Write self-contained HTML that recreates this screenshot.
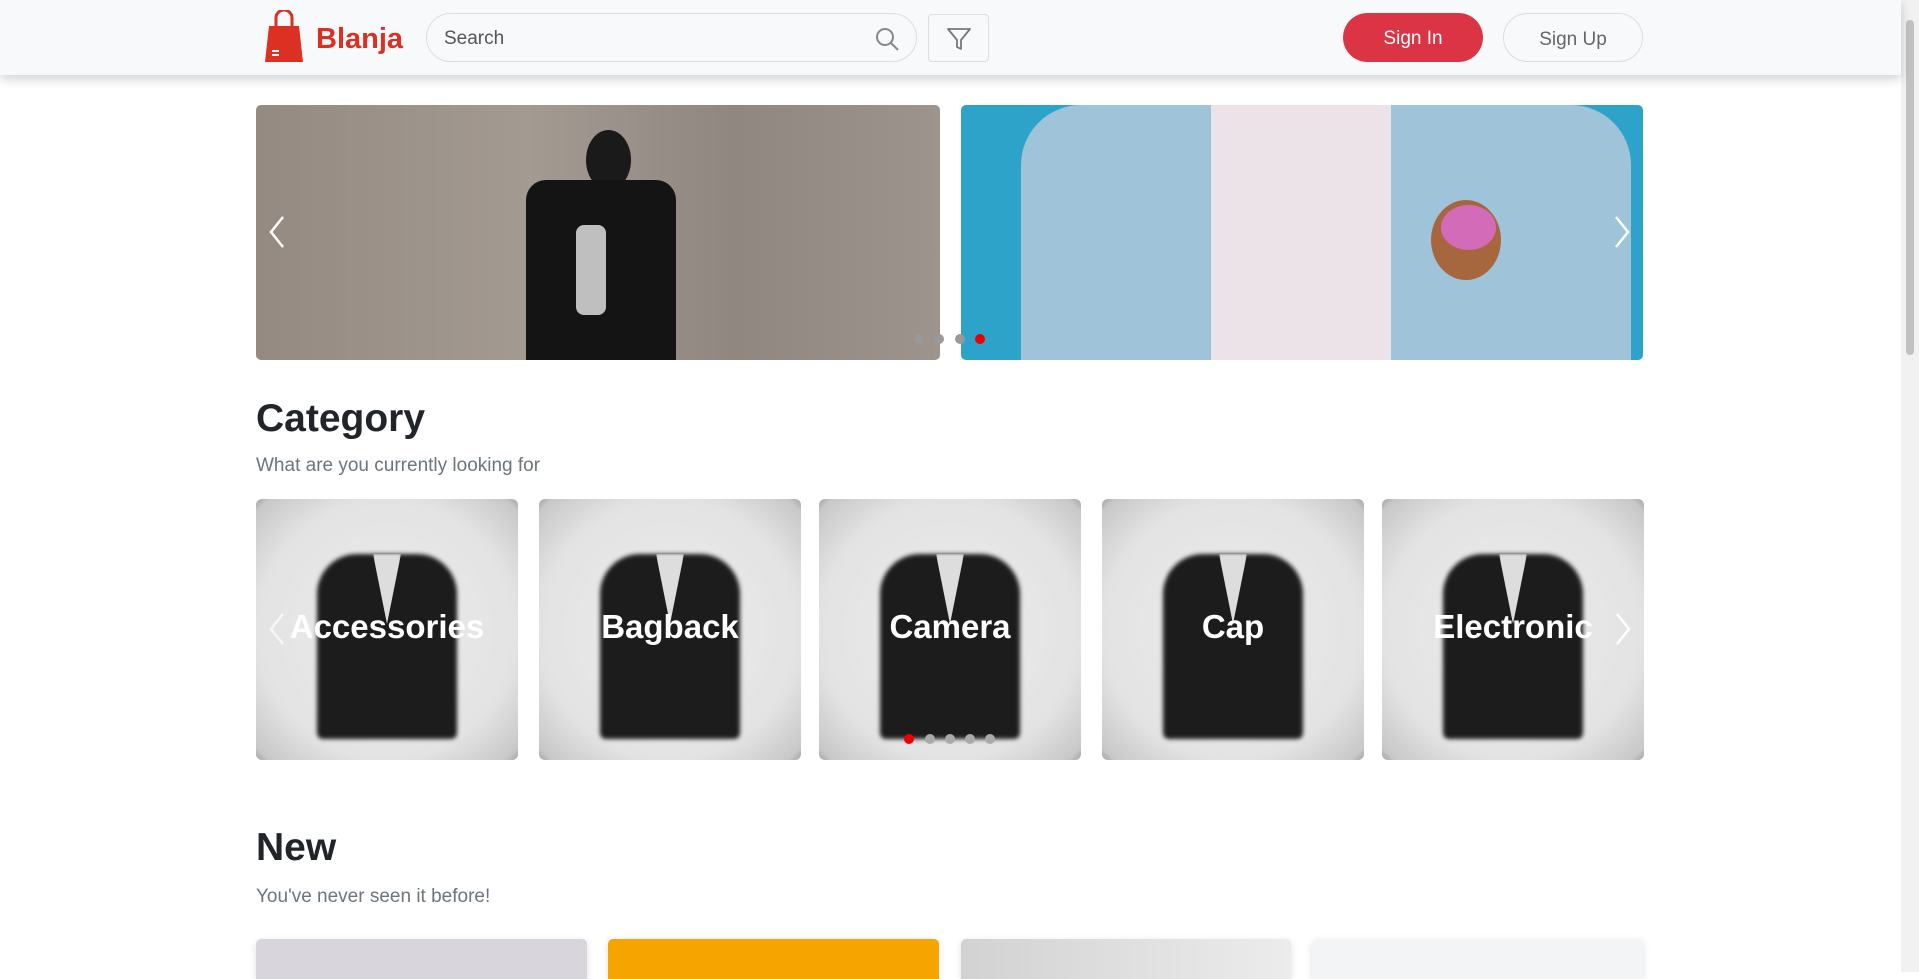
<!DOCTYPE html>
<html><head><meta charset="utf-8">
<style>
*{box-sizing:border-box;margin:0;padding:0}
body{width:1919px;height:972px;overflow:hidden;background:#fff;font-family:"Liberation Sans",sans-serif;position:relative}
.hdr{position:absolute;left:0;top:0;width:1901px;height:75px;background:#f8f9fa;box-shadow:0 4px 10px rgba(0,0,0,.18);z-index:5}
.logo{position:absolute;left:316px;top:23px;font-size:29px;font-weight:bold;color:#db3022}
.search{position:absolute;left:426px;top:13px;width:491px;height:49px;border:1px solid #dcdde0;border-radius:25px;background:#f8f9fa}
.search span{position:absolute;left:17px;top:14px;font-size:19px;color:#555}
.filter{position:absolute;left:928px;top:14px;width:61px;height:48px;border:1px solid #dcdde0;border-radius:4px}
.btn{position:absolute;top:13px;width:140px;height:49px;border-radius:25px;font-size:19px;text-align:center;line-height:51px}
.sb{position:absolute;right:0;top:0;width:18px;height:972px;background:#f1f1f1}
.sb div{position:absolute;left:5px;top:20px;width:8px;height:335px;background:#c1c1c1;border-radius:4px}
.ban{position:absolute;top:105px;height:255px;border-radius:5px;overflow:hidden}
.dot{position:absolute;width:10px;height:10px;border-radius:50%;background:#999}
h2{position:absolute;left:256px;font-size:39px;font-weight:bold;color:#212529}
.sub{position:absolute;left:256px;font-size:19px;color:#6c757d}
.cat{position:absolute;top:499px;width:262px;height:261px;border-radius:6px;overflow:hidden;background:radial-gradient(ellipse at center,#ececec 0%,#e3e3e3 70%,#c8c8c8 95%,#333 115%)}
.cat .jk{position:absolute;left:50%;top:55px;width:140px;height:185px;margin-left:-70px;background:#1c1c1c;border-radius:40px 40px 6px 6px;filter:blur(2px)}
.cat .sh{position:absolute;left:50%;top:55px;width:28px;height:70px;margin-left:-14px;background:#ddd;clip-path:polygon(0 0,100% 0,50% 100%);filter:blur(1px)}
.cat b{position:absolute;left:0;right:0;top:109px;text-align:center;color:#fff;font-size:33px}
.pc{position:absolute;top:939px;height:40px;border-radius:5px 5px 0 0;box-shadow:0 2px 8px rgba(0,0,0,.12)}
</style></head><body>
<div class="hdr">
<svg style="position:absolute;left:264px;top:10px" width="40" height="54" viewBox="0 0 40 54"><path d="M12 18 V8 a8 8 0 0 1 16 0 V18" fill="none" stroke="#db3022" stroke-width="3"/><path d="M5 16 H35 L39 52 H1 Z" fill="#db3022"/><rect x="8" y="40" width="7" height="2" fill="#fff"/><rect x="8" y="44" width="7" height="2" fill="#fff"/></svg>
<div class="logo">Blanja</div>
<div class="search"><span>Search</span>
<svg style="position:absolute;right:16px;top:12px" width="26" height="26" viewBox="0 0 26 26"><circle cx="11" cy="11" r="8" fill="none" stroke="#888" stroke-width="2"/><path d="M17 17 L24 24" stroke="#888" stroke-width="2"/></svg></div>
<div class="filter"><svg style="position:absolute;left:17px;top:11px" width="26" height="26" viewBox="0 0 26 26"><path d="M2 3 H24 L15 14 V23 L11 21 V14 Z" fill="none" stroke="#777" stroke-width="1.8" stroke-linejoin="round"/></svg></div>
<div class="btn" style="left:1343px;background:#db3545;color:#fff">Sign In</div>
<div class="btn" style="left:1503px;border:1px solid #dcdde0;color:#666">Sign Up</div>
</div>
<div class="sb"><div></div></div>

<div class="ban" style="left:256px;width:684px;background:linear-gradient(90deg,#948a82,#a39a92 40%,#8f8780 70%,#9c948d)">
<div style="position:absolute;left:330px;top:25px;width:45px;height:60px;border-radius:50%;background:#1a1a1a"></div>
<div style="position:absolute;left:270px;top:75px;width:150px;height:180px;background:#141414;border-radius:20px 20px 0 0"></div>
<div style="position:absolute;left:320px;top:120px;width:30px;height:90px;background:#ddd;border-radius:8px;opacity:.85"></div>
<svg style="position:absolute;left:12px;top:110px" width="18" height="34"><path d="M15 2 L3 17 L15 32" fill="none" stroke="#fff" stroke-width="2.5"/></svg>
</div>
<div class="ban" style="left:961px;width:682px;background:#2ea3c9">
<div style="position:absolute;left:60px;top:0;width:610px;height:255px;background:#9fc3d8;border-radius:60px 60px 0 0"></div>
<div style="position:absolute;left:250px;top:0;width:180px;height:255px;background:#ece3e8"></div>
<div style="position:absolute;left:470px;top:95px;width:70px;height:80px;border-radius:50%;background:#a6673e"></div>
<div style="position:absolute;left:480px;top:100px;width:55px;height:45px;border-radius:50%;background:#d46bb8"></div>
<svg style="position:absolute;right:12px;top:110px" width="18" height="34"><path d="M3 2 L15 17 L3 32" fill="none" stroke="#fff" stroke-width="2.5"/></svg>
</div>
<div class="dot" style="left:914px;top:334px"></div><div class="dot" style="left:934px;top:334px"></div><div class="dot" style="left:955px;top:334px"></div><div class="dot" style="left:975px;top:334px;background:#e00"></div>

<h2 style="top:397px">Category</h2>
<div class="sub" style="top:455px">What are you currently looking for</div>
<div class="cat" style="left:256px"><div class="jk"></div><div class="sh"></div><b>Accessories</b></div>
<div class="cat" style="left:539px"><div class="jk"></div><div class="sh"></div><b>Bagback</b></div>
<div class="cat" style="left:819px"><div class="jk"></div><div class="sh"></div><b>Camera</b></div>
<div class="cat" style="left:1102px"><div class="jk"></div><div class="sh"></div><b>Cap</b></div>
<div class="cat" style="left:1382px"><div class="jk"></div><div class="sh"></div><b>Electronic</b></div>
<svg style="position:absolute;left:268px;top:612px" width="18" height="34"><path d="M15 2 L3 17 L15 32" fill="none" stroke="#fff" stroke-width="2.5" opacity=".7"/></svg>
<svg style="position:absolute;left:1614px;top:612px" width="18" height="34"><path d="M3 2 L15 17 L3 32" fill="none" stroke="#fff" stroke-width="2.5"/></svg>
<div class="dot" style="left:904px;top:734px;background:#e00"></div><div class="dot" style="left:925px;top:734px;background:#aaa"></div><div class="dot" style="left:945px;top:734px;background:#aaa"></div><div class="dot" style="left:965px;top:734px;background:#aaa"></div><div class="dot" style="left:985px;top:734px;background:#aaa"></div>

<h2 style="top:826px">New</h2>
<div class="sub" style="top:886px">You've never seen it before!</div>
<div class="pc" style="left:256px;width:331px;background:#d8d6dc"></div>
<div class="pc" style="left:608px;width:331px;background:#f6a500"></div>
<div class="pc" style="left:961px;width:330px;background:linear-gradient(90deg,#d2d2d2,#ececec)"></div>
<div class="pc" style="left:1312px;width:331px;background:#f3f4f6"></div>
</body></html>
